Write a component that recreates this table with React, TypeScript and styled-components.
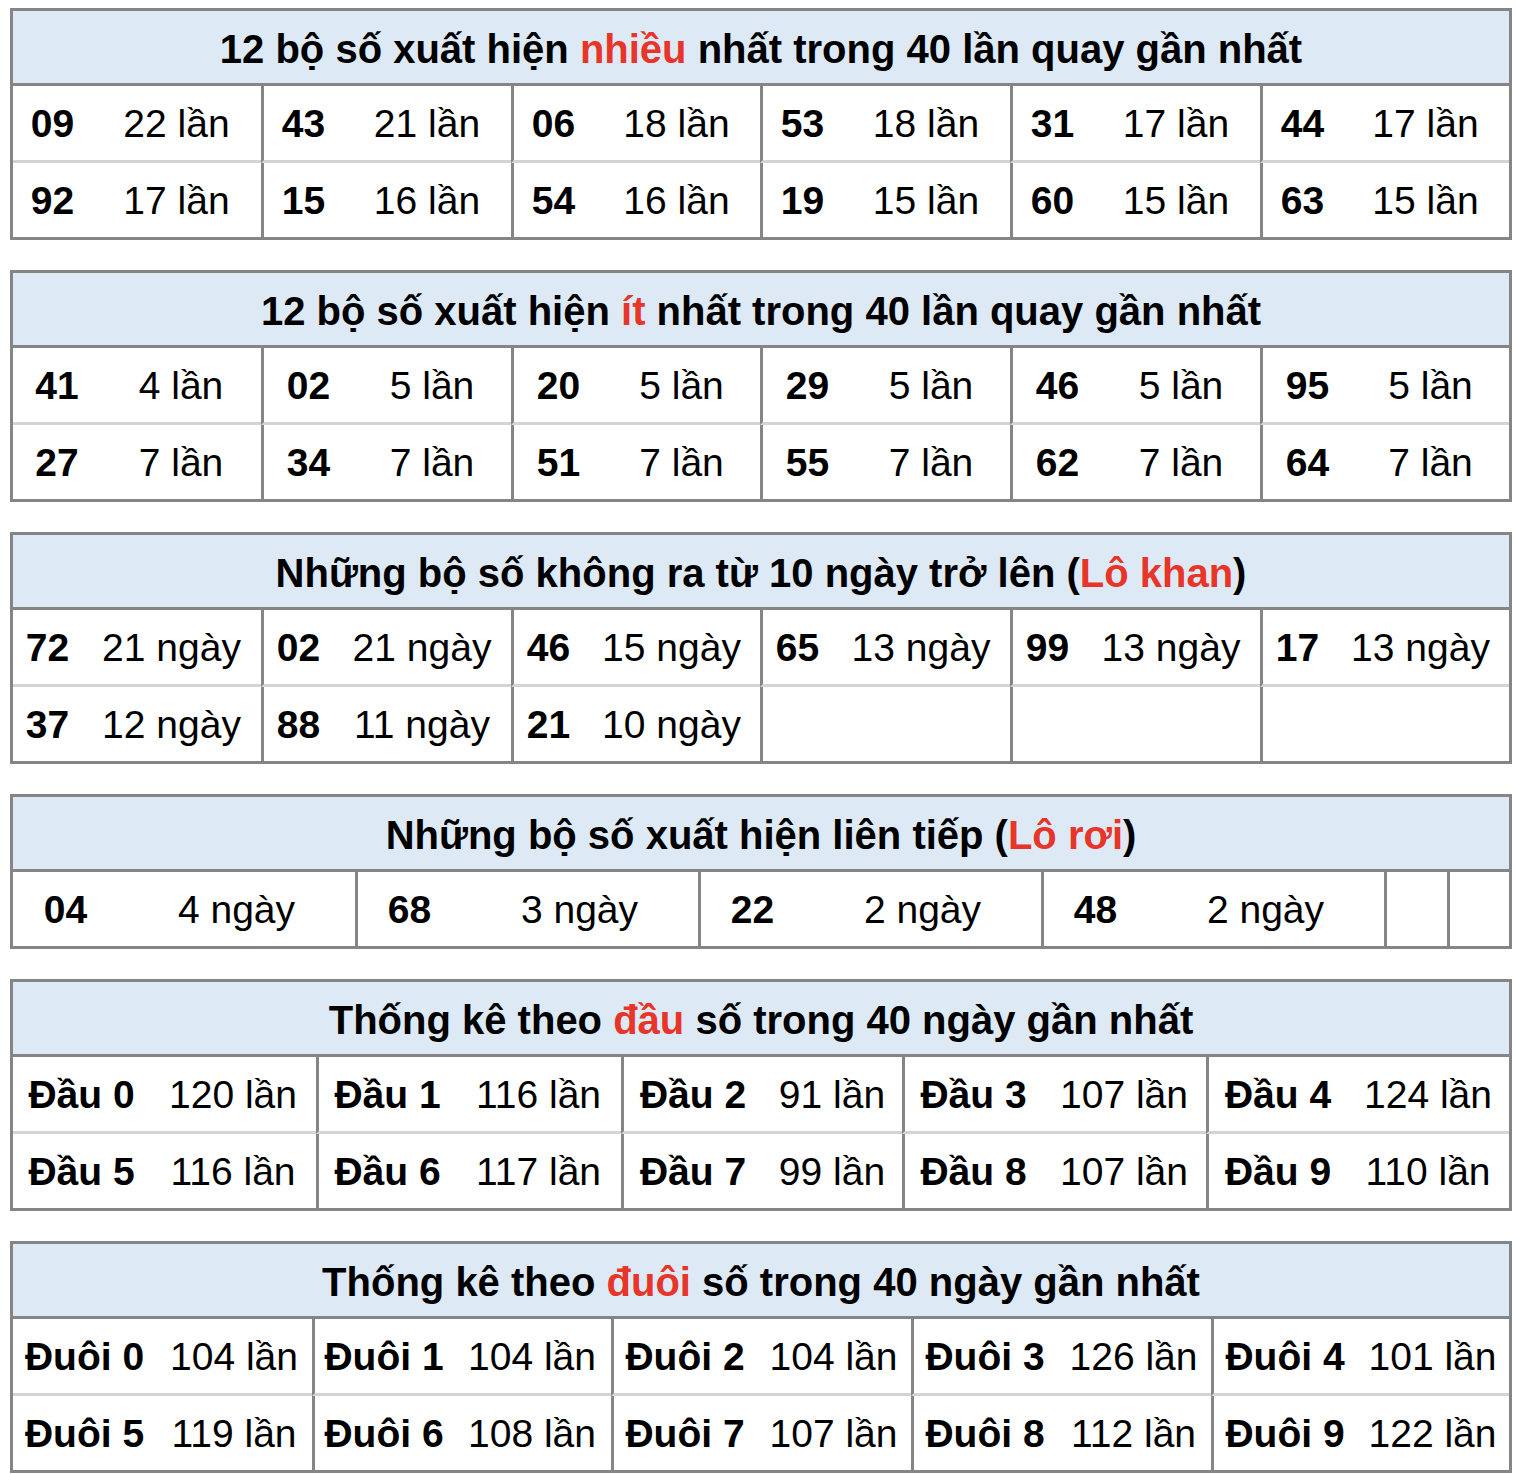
import React from 'react'
import styled, { createGlobalStyle } from 'styled-components'

const GlobalStyle = createGlobalStyle`
    html, body {
        margin: 0;
        padding: 0;
        background: #ffffff;
    }
    body {
        font-family: 'Liberation Sans', Arial, sans-serif;
        color: #000000;
    }
`

type Cell = { num?: string; count?: string }

type TableData = {
    title: React.ReactNode
    // widths of [number, count] for each group, border included
    groups: [number, number][]
    // trailing single empty columns (group starts)
    extra?: number[]
    rows: Cell[][]
}

const Red = styled.span`
    color: #e8352a;
`

const tables: TableData[] = [
    {
        title: (
            <>
                12 bộ số xuất hiện <Red>nhiều</Red> nhất trong 40 lần quay gần nhất
            </>
        ),
        groups: [
            [79, 169],
            [82, 168],
            [82, 167],
            [82, 168],
            [82, 168],
            [82, 167],
        ],
        rows: [
            [
                { num: '09', count: '22 lần' },
                { num: '43', count: '21 lần' },
                { num: '06', count: '18 lần' },
                { num: '53', count: '18 lần' },
                { num: '31', count: '17 lần' },
                { num: '44', count: '17 lần' },
            ],
            [
                { num: '92', count: '17 lần' },
                { num: '15', count: '16 lần' },
                { num: '54', count: '16 lần' },
                { num: '19', count: '15 lần' },
                { num: '60', count: '15 lần' },
                { num: '63', count: '15 lần' },
            ],
        ],
    },
    {
        title: (
            <>
                12 bộ số xuất hiện <Red>ít</Red> nhất trong 40 lần quay gần nhất
            </>
        ),
        groups: [
            [88, 160],
            [92, 158],
            [92, 157],
            [92, 158],
            [92, 158],
            [92, 157],
        ],
        rows: [
            [
                { num: '41', count: '4 lần' },
                { num: '02', count: '5 lần' },
                { num: '20', count: '5 lần' },
                { num: '29', count: '5 lần' },
                { num: '46', count: '5 lần' },
                { num: '95', count: '5 lần' },
            ],
            [
                { num: '27', count: '7 lần' },
                { num: '34', count: '7 lần' },
                { num: '51', count: '7 lần' },
                { num: '55', count: '7 lần' },
                { num: '62', count: '7 lần' },
                { num: '64', count: '7 lần' },
            ],
        ],
    },
    {
        title: (
            <>
                Những bộ số không ra từ 10 ngày trở lên (<Red>Lô khan</Red>)
            </>
        ),
        groups: [
            [69, 179],
            [72, 178],
            [72, 177],
            [72, 178],
            [72, 178],
            [72, 177],
        ],
        rows: [
            [
                { num: '72', count: '21 ngày' },
                { num: '02', count: '21 ngày' },
                { num: '46', count: '15 ngày' },
                { num: '65', count: '13 ngày' },
                { num: '99', count: '13 ngày' },
                { num: '17', count: '13 ngày' },
            ],
            [
                { num: '37', count: '12 ngày' },
                { num: '88', count: '11 ngày' },
                { num: '21', count: '10 ngày' },
                {},
                {},
                {},
            ],
        ],
    },
    {
        title: (
            <>
                Những bộ số xuất hiện liên tiếp (<Red>Lô rơi</Red>)
            </>
        ),
        groups: [
            [105, 237],
            [106, 237],
            [106, 237],
            [106, 237],
        ],
        extra: [63, 62],
        rows: [
            [
                { num: '04', count: '4 ngày' },
                { num: '68', count: '3 ngày' },
                { num: '22', count: '2 ngày' },
                { num: '48', count: '2 ngày' },
            ],
        ],
    },
    {
        title: (
            <>
                Thống kê theo <Red>đầu</Red> số trong 40 ngày gần nhất
            </>
        ),
        groups: [
            [137, 166],
            [140, 165],
            [141, 140],
            [140, 164],
            [141, 162],
        ],
        rows: [
            [
                { num: 'Đầu 0', count: '120 lần' },
                { num: 'Đầu 1', count: '116 lần' },
                { num: 'Đầu 2', count: '91 lần' },
                { num: 'Đầu 3', count: '107 lần' },
                { num: 'Đầu 4', count: '124 lần' },
            ],
            [
                { num: 'Đầu 5', count: '116 lần' },
                { num: 'Đầu 6', count: '117 lần' },
                { num: 'Đầu 7', count: '99 lần' },
                { num: 'Đầu 8', count: '107 lần' },
                { num: 'Đầu 9', count: '110 lần' },
            ],
        ],
    },
    {
        title: (
            <>
                Thống kê theo <Red>đuôi</Red> số trong 40 ngày gần nhất
            </>
        ),
        groups: [
            [143, 156],
            [141, 158],
            [145, 155],
            [145, 155],
            [145, 153],
        ],
        rows: [
            [
                { num: 'Đuôi 0', count: '104 lần' },
                { num: 'Đuôi 1', count: '104 lần' },
                { num: 'Đuôi 2', count: '104 lần' },
                { num: 'Đuôi 3', count: '126 lần' },
                { num: 'Đuôi 4', count: '101 lần' },
            ],
            [
                { num: 'Đuôi 5', count: '119 lần' },
                { num: 'Đuôi 6', count: '108 lần' },
                { num: 'Đuôi 7', count: '107 lần' },
                { num: 'Đuôi 8', count: '112 lần' },
                { num: 'Đuôi 9', count: '122 lần' },
            ],
        ],
    },
]

const StatTable = ({ title, groups, extra = [], rows }: TableData) => {
    const columns = [...groups.flat(), ...extra].map((w) => `${w}px`).join(' ')

    return (
        <Table>
            <Header>{title}</Header>
            <Body style={{ gridTemplateColumns: columns }}>
                {rows.map((row, r) => {
                    const isLast = r === rows.length - 1
                    return (
                        <React.Fragment key={r}>
                            {groups.map((_, g) => {
                                const item = row[g] || {}
                                return (
                                    <React.Fragment key={g}>
                                        <NumCell $groupStart={g > 0} $lastRow={isLast}>
                                            {item.num}
                                        </NumCell>
                                        <CountCell $lastRow={isLast}>{item.count}</CountCell>
                                    </React.Fragment>
                                )
                            })}
                            {extra.map((_, e) => (
                                <NumCell key={`e${e}`} $groupStart $lastRow={isLast} />
                            ))}
                        </React.Fragment>
                    )
                })}
            </Body>
        </Table>
    )
}

export default function App() {
    return (
        <>
            <GlobalStyle />
            <Page>
                {tables.map((t, i) => (
                    <StatTable key={i} {...t} />
                ))}
            </Page>
        </>
    )
}

const Page = styled.div`
    display: flex;
    flex-direction: column;
    gap: 30px;
    width: 1502px;
    padding: 8px 0 0 10px;
`

const Table = styled.div`
    border: 3px solid #858585;
    background: #ffffff;
`

const Header = styled.div`
    height: 72px;
    line-height: 76px;
    text-align: center;
    background: #ddeaf6;
    border-bottom: 3px solid #858585;
    font-size: 40px;
    font-weight: 700;
    white-space: nowrap;
`

const Body = styled.div`
    display: grid;
`

const BaseCell = styled.div<{ $lastRow: boolean }>`
    box-sizing: border-box;
    height: ${({ $lastRow }) => ($lastRow ? '74px' : '77px')};
    padding-top: 1px;
    display: flex;
    align-items: center;
    justify-content: center;
    font-size: 39px;
    white-space: nowrap;
    border-bottom: ${({ $lastRow }) => ($lastRow ? 'none' : '3px solid #d4d4d4')};
`

const NumCell = styled(BaseCell)<{ $groupStart?: boolean }>`
    font-weight: 700;
    border-left: ${({ $groupStart }) => ($groupStart ? '3px solid #858585' : 'none')};
`

const CountCell = styled(BaseCell)`
    font-weight: 400;
`
